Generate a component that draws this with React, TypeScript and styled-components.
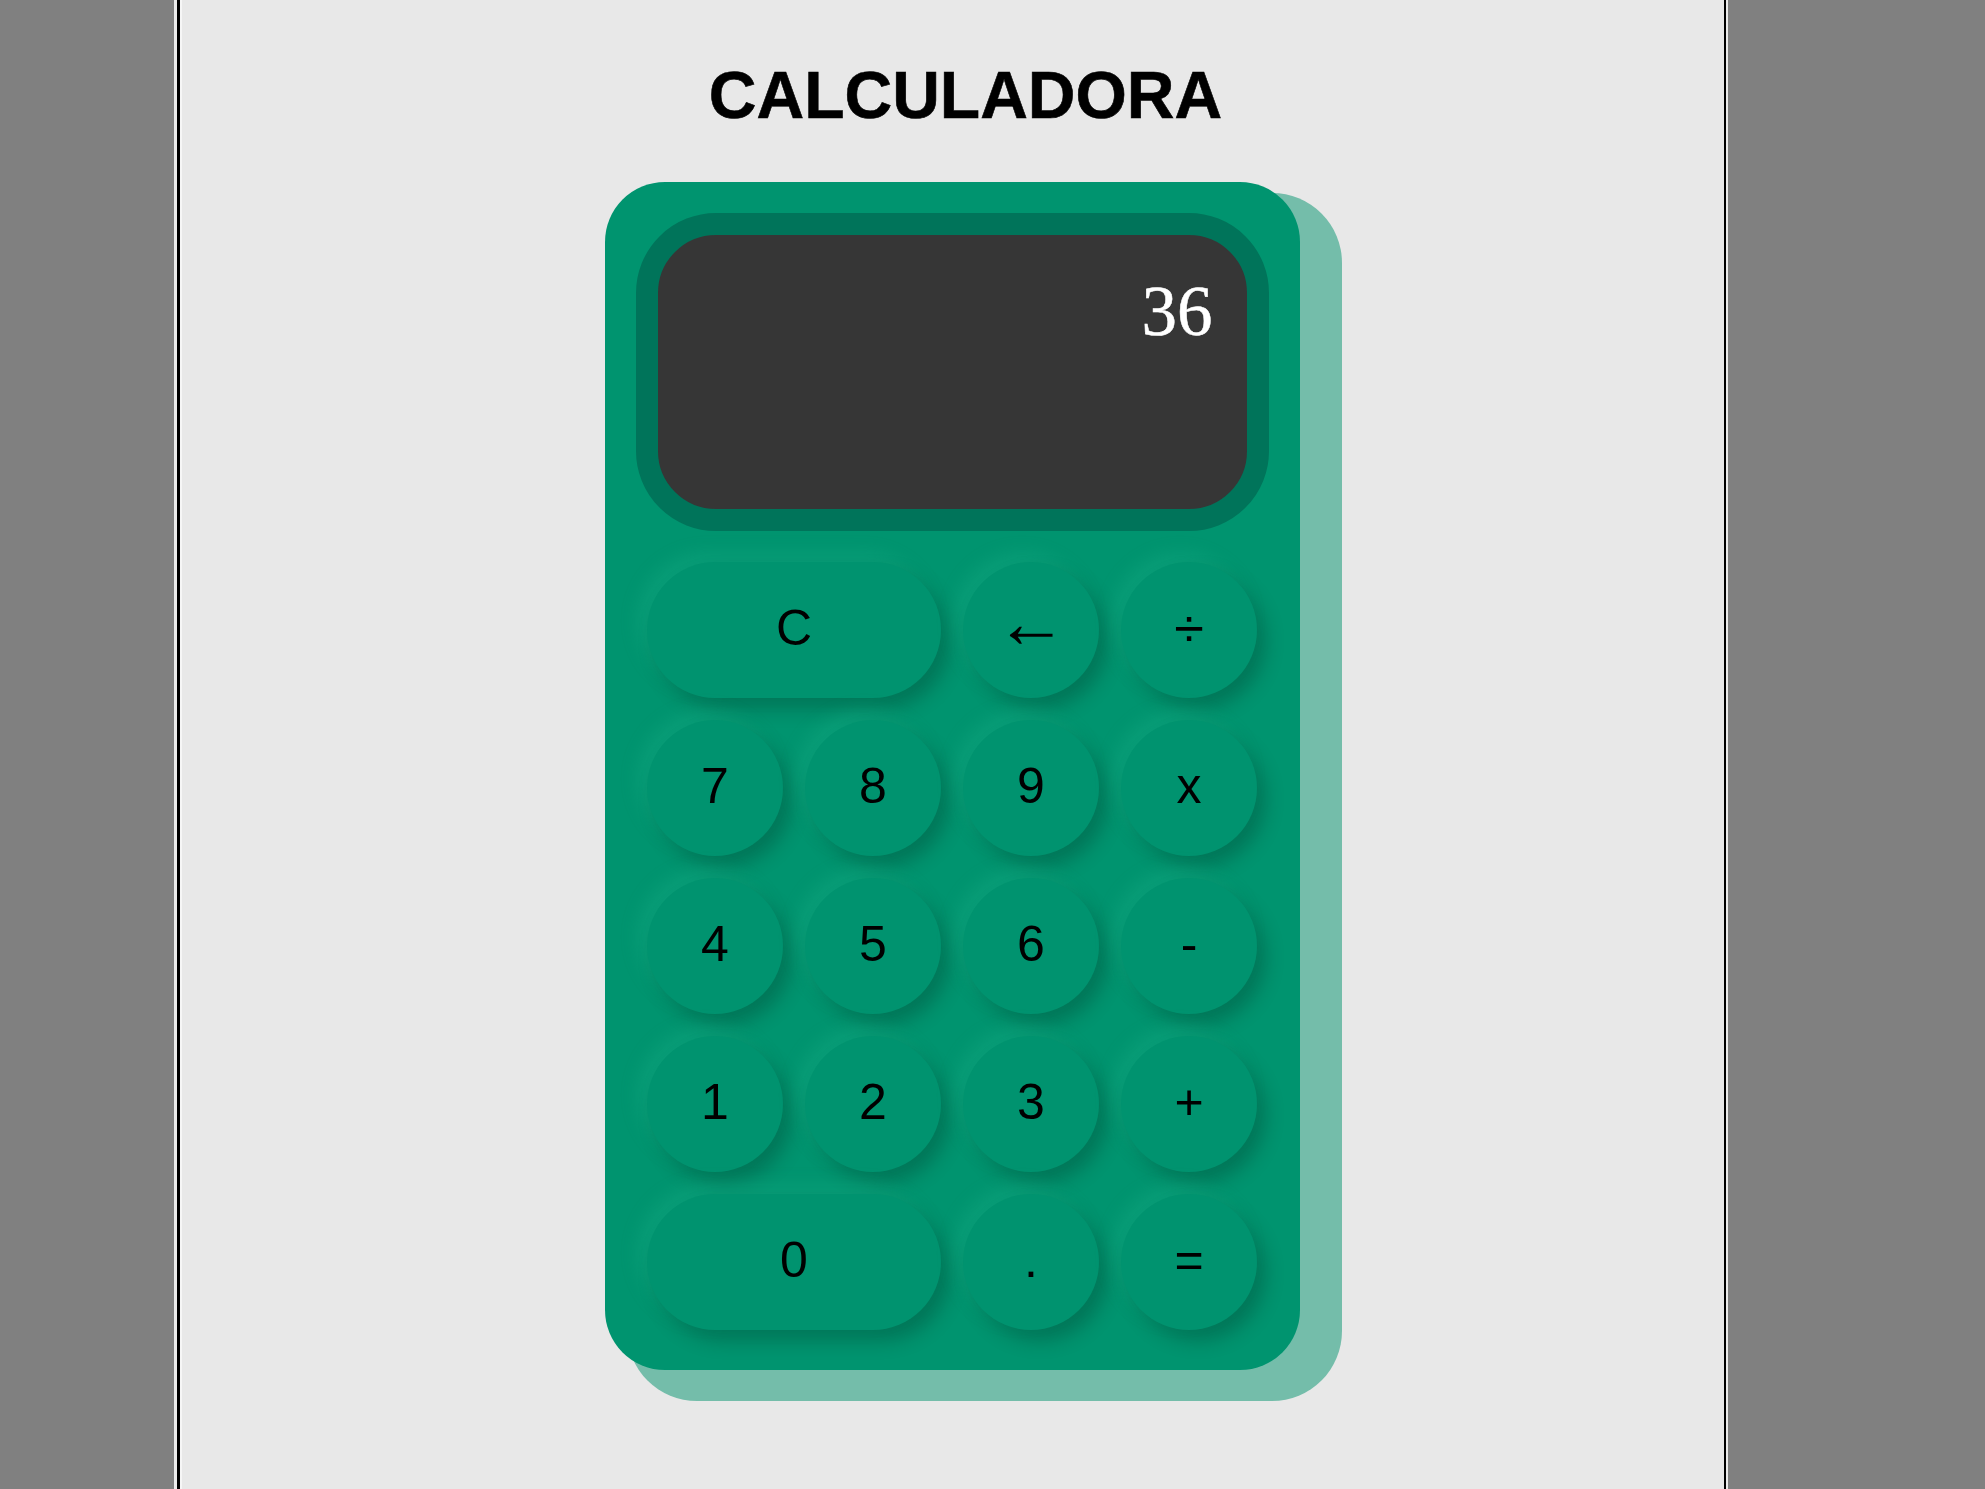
import React from "react";
import styled, { createGlobalStyle } from "styled-components";

const GlobalStyle = createGlobalStyle`
  html, body {
    margin: 0;
    padding: 0;
    background: #808080;
  }
  * { box-sizing: border-box; }
`;

const Page = styled.div`
  display: flex;
  min-height: 100vh;
  padding-left: 174px;
  background: #808080;
`;

const Sheet = styled.div`
  display: flex;
  width: 1554px;
  padding: 0 2px 0 3px;
  background: #ececec;
`;

const Frame = styled.main`
  flex: 1;
  display: flex;
  flex-direction: column;
  align-items: center;
  background: #e8e8e8;
  border-left: 3px solid #000;
  border-right: 2px solid #000;
  box-shadow: inset 2px 0 0 #f6f6f6;
`;

const Title = styled.h1`
  margin: 57px 0 0;
  padding-left: 27px;
  height: 76px;
  line-height: 76px;
  font-family: "Liberation Sans", Arial, sans-serif;
  font-weight: 700;
  font-size: 66px;
  color: #000;
  -webkit-text-stroke: 0.6px #000;
`;

const Calculator = styled.div`
  margin-top: 49px;
  width: 695px;
  padding: 31px 43px 40px;
  display: flex;
  flex-direction: column;
  align-items: center;
  gap: 31px;
  border-radius: 60px;
  background: #00946f;
  box-shadow: 32px 21px 0 10px #74bdaa;
`;

const Display = styled.div`
  width: 633px;
  height: 318px;
  border: 22px solid #00745a;
  border-radius: 80px;
  background: #363636;
  padding: 36px 34px;
  text-align: right;
  font-family: "Liberation Serif", "Times New Roman", serif;
  font-size: 71px;
  line-height: normal;
  color: #ffffff;
  -webkit-text-stroke: 0.5px #ffffff;
`;

const Keys = styled.div`
  display: grid;
  grid-template-columns: repeat(4, 136px);
  grid-auto-rows: 136px;
  gap: 22px;
`;

const Key = styled.button<{ $span?: number; $size?: number; $lift?: number }>`
  grid-column: span ${(p) => p.$span ?? 1};
  display: flex;
  align-items: center;
  justify-content: center;
  border: none;
  border-radius: 68px;
  background: #00936f;
  color: #000;
  font-family: "Liberation Sans", Arial, "DejaVu Sans", sans-serif;
  font-size: ${(p) => p.$size ?? 50}px;
  line-height: normal;
  padding: 0 0 ${(p) => p.$lift ?? 4}px;
  cursor: pointer;
  box-shadow: 9px 11px 18px rgba(0, 40, 28, 0.26),
    -9px -9px 18px rgba(40, 190, 150, 0.22);
`;

const keys: { label: string; span?: number; size?: number; lift?: number }[] = [
  { label: "C", span: 2 },
  { label: "←", size: 72, lift: 16 },
  { label: "÷", size: 54 },
  { label: "7" },
  { label: "8" },
  { label: "9" },
  { label: "x" },
  { label: "4" },
  { label: "5" },
  { label: "6" },
  { label: "-" },
  { label: "1" },
  { label: "2" },
  { label: "3" },
  { label: "+" },
  { label: "0", span: 2 },
  { label: "." },
  { label: "=" },
];

export default function App() {
  return (
    <>
      <GlobalStyle />
      <Page>
        <Sheet>
          <Frame>
            <Title>CALCULADORA</Title>
            <Calculator>
              <Display>36</Display>
              <Keys>
                {keys.map((k) => (
                  <Key key={k.label} $span={k.span} $size={k.size} $lift={k.lift}>
                    {k.label}
                  </Key>
                ))}
              </Keys>
            </Calculator>
          </Frame>
        </Sheet>
      </Page>
    </>
  );
}
